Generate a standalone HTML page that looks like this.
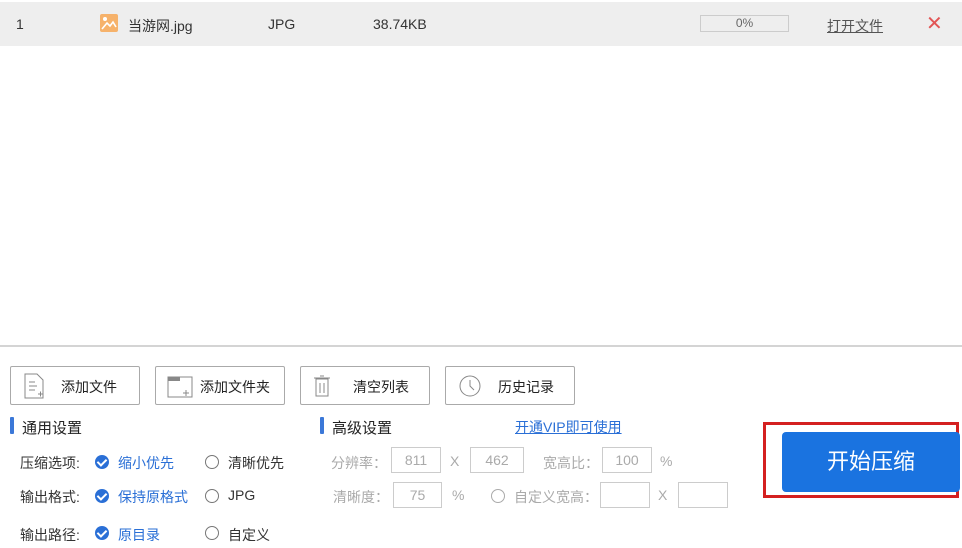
<!DOCTYPE html><html><head><meta charset="utf-8"><style>
*{margin:0;padding:0;box-sizing:border-box}
body{width:962px;height:548px;background:#fff;position:relative;overflow:hidden;font-family:"Liberation Sans","Noto Sans CJK SC",sans-serif;font-size:14px;color:#333}
.a{position:absolute;white-space:nowrap}
.btn{position:absolute;top:366px;width:130px;height:39px;border:1px solid #aaa;border-radius:2px;background:#fff}
.btn span{position:absolute;top:10px;font-size:14px;color:#222}
.bar{position:absolute;width:4px;height:17px;background:#3b78d8;border-radius:1px}
.chk{position:absolute;width:14px;height:14px;border-radius:50%;background:#2a6fd6}
.chk:after{content:"";position:absolute;left:4px;top:2px;width:4px;height:7px;border:solid #fff;border-width:0 2px 2px 0;transform:rotate(45deg)}
.rad{position:absolute;width:14px;height:14px;border-radius:50%;border:1px solid #777}
.box{position:absolute;height:26px;border:1px solid #ccc;color:#aaa;text-align:center;line-height:24px;font-size:14px}
.g{color:#aaa}
.b{color:#2a6fd6}
</style></head><body>
<div class="a" style="left:0;top:2px;width:962px;height:44px;background:#eeeeee"></div>
<div class="a" style="left:16px;top:16px">1</div>
<svg class="a" style="left:100px;top:14px" width="18" height="18"><rect width="18" height="18" rx="2" fill="#f6b26b"/><circle cx="5" cy="5" r="2" fill="#fff"/><path d="M2 15 L7 9 L10 12 L13 8 L16 13" stroke="#fff" stroke-width="1.6" fill="none"/></svg>
<div class="a" style="left:128px;top:16px">当游网.jpg</div>
<div class="a" style="left:268px;top:16px">JPG</div>
<div class="a" style="left:373px;top:16px">38.74KB</div>
<div class="a" style="left:700px;top:15px;width:89px;height:17px;border:1px solid #ccc;background:#eee;text-align:center;font-size:12px;line-height:15px;color:#666">0%</div>
<div class="a" style="left:827px;top:16px;color:#555;text-decoration:underline">打开文件</div>
<div class="a" style="left:926px;top:11px;color:#e25555;font-size:20px">✕</div>
<div class="a" style="left:0;top:345px;width:962px;height:2px;background:#d4d4d4"></div>

<div class="btn" style="left:10px"><svg class="a" style="left:12px;top:6px" width="22" height="26"><path d="M2 1H14L20 7V25H2Z" fill="none" stroke="#888"/><path d="M6 9h6M6 13h8M6 17h6M15 21h5M17.5 18.5v5" stroke="#888"/></svg><span style="left:50px">添加文件</span></div>
<div class="btn" style="left:155px"><svg class="a" style="left:11px;top:9px" width="26" height="22"><rect x="1" y="1" width="24" height="20" fill="none" stroke="#888"/><rect x="1" y="1" width="12" height="4" fill="#888"/><path d="M16 17h6M19 14v6" stroke="#888"/></svg><span style="left:44px">添加文件夹</span></div>
<div class="btn" style="left:300px"><svg class="a" style="left:12px;top:8px" width="18" height="22"><path d="M3 4h12V21H3ZM1 3h16M7 1h4M7 8v10M11 8v10" fill="none" stroke="#888"/></svg><span style="left:52px">清空列表</span></div>
<div class="btn" style="left:445px"><svg class="a" style="left:12px;top:7px" width="24" height="24"><circle cx="12" cy="12" r="10" fill="none" stroke="#888"/><path d="M12 6v6l4 4" fill="none" stroke="#888"/></svg><span style="left:52px">历史记录</span></div>

<div class="bar" style="left:10px;top:417px"></div>
<div class="a" style="left:22px;top:417px;font-size:15px;color:#222">通用设置</div>
<div class="bar" style="left:320px;top:417px"></div>
<div class="a" style="left:332px;top:417px;font-size:15px;color:#222">高级设置</div>
<div class="a b" style="left:515px;top:417px;text-decoration:underline">开通VIP即可使用</div>

<div class="a" style="left:20px;top:453px">压缩选项:</div>
<div class="chk" style="left:95px;top:455px"></div><div class="a b" style="left:118px;top:453px">缩小优先</div>
<div class="rad" style="left:205px;top:455px"></div><div class="a" style="left:228px;top:453px">清晰优先</div>
<div class="a" style="left:20px;top:487px">输出格式:</div>
<div class="chk" style="left:95px;top:489px"></div><div class="a b" style="left:118px;top:487px">保持原格式</div>
<div class="rad" style="left:205px;top:489px"></div><div class="a" style="left:228px;top:487px">JPG</div>
<div class="a" style="left:20px;top:525px">输出路径:</div>
<div class="chk" style="left:95px;top:526px"></div><div class="a b" style="left:118px;top:525px">原目录</div>
<div class="rad" style="left:205px;top:526px"></div><div class="a" style="left:228px;top:525px">自定义</div>

<div class="a g" style="left:331px;top:453px">分辨率：</div>
<div class="box" style="left:391px;top:447px;width:50px">811</div>
<div class="a g" style="left:450px;top:453px">X</div>
<div class="box" style="left:470px;top:447px;width:54px">462</div>
<div class="a g" style="left:543px;top:453px">宽高比：</div>
<div class="box" style="left:602px;top:447px;width:50px">100</div>
<div class="a g" style="left:660px;top:453px">%</div>
<div class="a g" style="left:333px;top:487px">清晰度：</div>
<div class="box" style="left:393px;top:482px;width:49px">75</div>
<div class="a g" style="left:452px;top:487px">%</div>
<div class="rad" style="left:491px;top:489px;border-color:#aaa"></div>
<div class="a g" style="left:514px;top:487px">自定义宽高：</div>
<div class="box" style="left:600px;top:482px;width:50px"></div>
<div class="a g" style="left:658px;top:487px">X</div>
<div class="box" style="left:678px;top:482px;width:50px"></div>

<div class="a" style="left:763px;top:422px;width:196px;height:76px;border:3px solid #d42020"></div>
<div class="a" style="left:782px;top:432px;width:178px;height:60px;background:#1a73e0;border-radius:4px;color:#fff;font-size:22px;text-align:center;line-height:60px">开始压缩</div>
</body></html>
